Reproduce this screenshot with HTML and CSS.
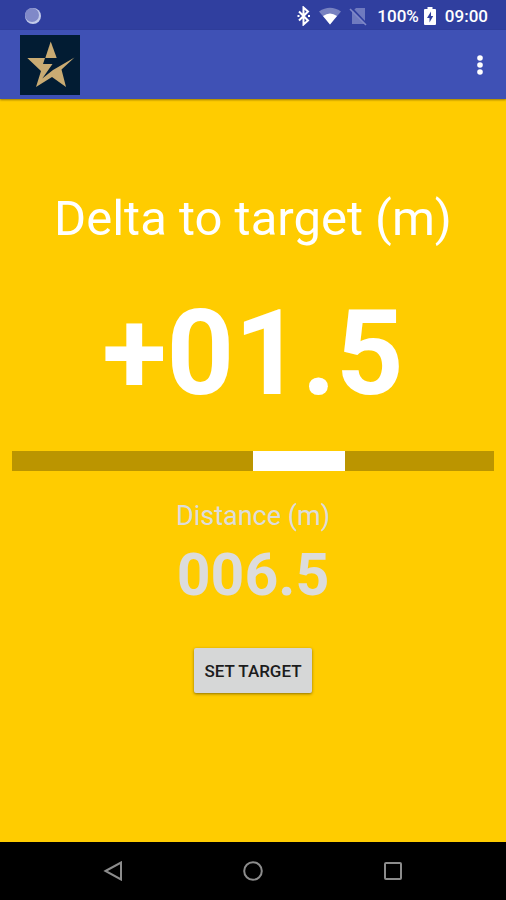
FILE: index.html
```html
<!doctype html>
<html lang="en">
  <head>
    <meta charset="UTF-8" />
    <meta name="viewport" content="width=device-width, initial-scale=1.0" />
    <title>Delta to target</title>
    <link rel="stylesheet" href="styles.css">
  </head>
  <body>
    <div class="status-bar">
      <svg class="notification" width="20" height="20" viewBox="0 0 20 20">
        <circle cx="10" cy="10" r="8" fill="#c3cbea" />
        <circle cx="9" cy="9" r="7" fill="#8089c8" />
      </svg>
      <svg class="bluetooth" width="14" height="20" viewBox="0 0 14 20" fill="none" stroke="#fff" stroke-width="2">
        <path d="M2 5.500l9 9-4.500 4V1.500l4.500 4-9 9" />
        <path d="M0.500 10h2M11 10h2" />
      </svg>
      <svg class="wifi" width="22" height="18" viewBox="0 0 22 18">
        <path d="M11 17.500L0 4.500Q11-3 22 4.500z" fill="#fff" opacity="0.35" />
        <path d="M11 17.500L4 9Q11 4 18 9z" fill="#fff" />
      </svg>
      <svg class="sim" width="18" height="20" viewBox="0 0 18 20">
        <path d="M7 2h9v16H3V6z" fill="#6f7abf" />
        <path d="M2 1.500l16 17" stroke="#303f9f" stroke-width="2" />
        <path d="M1 3l16 16" stroke="#8089c8" stroke-width="1.600" />
      </svg>
      <span class="battery-level">100%</span>
      <svg class="battery" width="12" height="20" viewBox="0 0 12 20">
        <path d="M3.500 1h5v2H11q1 0 1 1v14q0 1-1 1H1q-1 0-1-1V4q0-1 1-1h2.500z" fill="#fff" />
        <path d="M7 5.500L3 12h2.500v4.500L9.200 10H7z" fill="#303f9f" />
      </svg>
      <span class="clock">09:00</span>
    </div>

    <header class="app-bar">
      <svg class="logo" width="60" height="60" viewBox="0 0 60 60">
        <rect width="60" height="60" fill="#021c33" />
        <g fill="#c9ab73">
          <path d="M30.700 6.500l6 16.500H25.300z" />
          <path d="M7.300 23H25l-2 6h9.500L22.300 43.500 33 35l21.500-12.500-13 12L46 52 32 42 16 52l5-16z" />
        </g>
      </svg>
      <button class="menu-button" aria-label="More options">
        <svg width="6" height="20" viewBox="0 0 6 20" fill="#fff">
          <circle cx="3" cy="3" r="2.800" />
          <circle cx="3" cy="10" r="2.800" />
          <circle cx="3" cy="17" r="2.800" />
        </svg>
      </button>
    </header>

    <main class="content">
      <h1 class="delta-label">Delta to target (m)</h1>
      <p class="delta-value">+01.5</p>
      <div class="gauge" role="img" aria-label="Delta to target, +1.5 m">
        <div class="gauge-fill" style="width: 19%"></div>
      </div>
      <h2 class="distance-label">Distance (m)</h2>
      <p class="distance-value">006.5</p>
      <button class="set-target">SET TARGET</button>
    </main>

    <nav class="nav-bar">
      <button class="nav-button" aria-label="Back">
        <svg width="20" height="20" viewBox="0 0 20 20">
          <path d="M2.500 10L18 1.500v17z" />
        </svg>
      </button>
      <button class="nav-button" aria-label="Home">
        <svg width="20" height="20" viewBox="0 0 20 20">
          <circle cx="10" cy="10" r="8.800" />
        </svg>
      </button>
      <button class="nav-button" aria-label="Recent apps">
        <svg width="20" height="20" viewBox="0 0 20 20">
          <rect x="2" y="2" width="16" height="16" rx="1" />
        </svg>
      </button>
    </nav>
  </body>
</html>
```

FILE: styles.css
```css
* {
  box-sizing: border-box;
}
body {
  margin: 0;
  min-height: 100vh;
  display: flex;
  flex-direction: column;
  background: #ffcc00;
  color: #fff;
  font-family: Roboto, "Liberation Sans", sans-serif;
}
svg {
  display: block;
}
h1,
h2,
p {
  margin: 0;
}
button {
  border: none;
  font-family: inherit;
  cursor: pointer;
}

.status-bar {
  display: flex;
  align-items: center;
  height: 30px;
  padding: 2px 18px 0 23px;
  background: #303f9f;
  font-size: 17px;
  font-weight: 500;
  line-height: 28px;
}
.notification {
  margin-right: auto;
}
.wifi,
.sim {
  margin-left: 8px;
}
.battery-level {
  margin-left: 10px;
}
.battery {
  margin-left: 5px;
}
.clock {
  margin-left: 9px;
}

.app-bar {
  display: flex;
  align-items: center;
  justify-content: space-between;
  height: 69px;
  padding: 0 11px 0 20px;
  background: #3f51b5;
  box-shadow: 0 1px 2px rgba(0, 0, 0, 0.4);
}
.menu-button {
  padding: 14px 12px;
  background: none;
}

.content {
  flex: 1;
  display: flex;
  flex-direction: column;
  align-items: center;
  padding: 90px 12px 0;
}
.delta-label {
  font-size: 49px;
  font-weight: 400;
  line-height: 60px;
}
.delta-value {
  margin-top: 35px;
  font-size: 118px;
  font-weight: 700;
  line-height: 140px;
}
.gauge {
  width: 100%;
  height: 20px;
  margin-top: 27px;
  background: #bb9500;
}
/* the fill starts at the middle of the track */
.gauge-fill {
  height: 100%;
  margin-left: 50%;
  background: #fff;
}
.distance-label {
  margin-top: 29px;
  color: #dcdcdc;
  font-size: 27px;
  font-weight: 400;
  line-height: 32px;
}
.distance-value {
  margin-top: 8px;
  color: #dcdcdc;
  font-size: 59px;
  font-weight: 700;
  line-height: 70px;
}
.set-target {
  height: 45px;
  margin-top: 38px;
  padding: 0 10px;
  border-radius: 2px;
  background: #d6d7d7;
  box-shadow: 0 1px 3px rgba(0, 0, 0, 0.45);
  color: #1c1c1c;
  font-size: 17px;
  font-weight: 500;
}

.nav-bar {
  display: flex;
  justify-content: center;
  height: 58px;
  background: #000;
}
.nav-button {
  display: flex;
  align-items: center;
  justify-content: center;
  width: 140px;
  background: none;
}
.nav-button svg {
  fill: none;
  stroke: #8c8c8c;
  stroke-width: 2;
}
```
